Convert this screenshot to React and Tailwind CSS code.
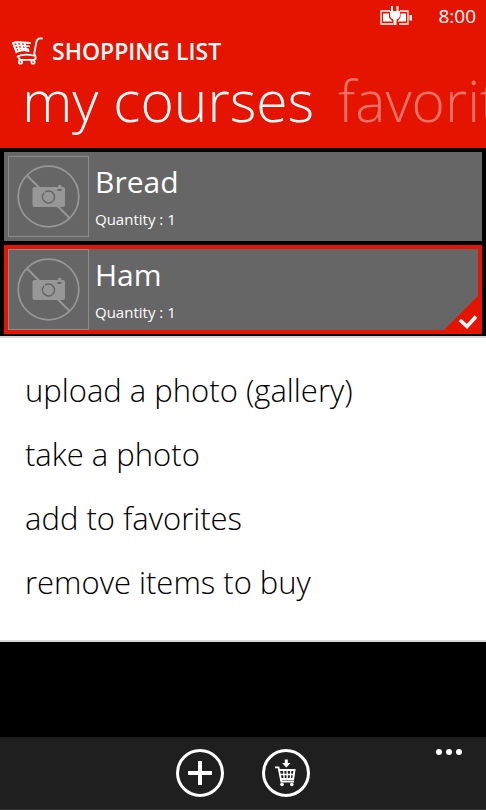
import { useState } from "react";

const items = [
  { id: 1, name: "Bread", quantity: 1 },
  { id: 2, name: "Ham", quantity: 1 },
];

const actions = [
  "upload a photo (gallery)",
  "take a photo",
  "add to favorites",
  "remove items to buy",
];

function BatteryIcon() {
  return (
    <svg width="34" height="20" viewBox="0 0 34 20" fill="none" aria-hidden="true">
      <path d="M10 5H1v13h12M19 18h9V5h-8" stroke="white" strokeWidth="1.3" />
      <path d="M3 7.500h6v4l3.500 4H3zM20.500 7.500H26v8h-8.500l3-4z" fill="white" />
      <path d="M29.500 9H32v5.500h-2.500z" fill="white" />
      <path d="M11 0h2v5h3.500V0h2v5H20v3.500c0 3-1.500 4.500-3.500 5V19h-3v-5.500c-2-.5-3.500-2-3.500-5V5h1z" fill="white" />
    </svg>
  );
}

function CartLogo() {
  return (
    <svg width="32" height="28" viewBox="0 0 32 28" fill="none" stroke="white" strokeLinecap="round" aria-hidden="true">
      <path d="M30 1.500c-3-.6-5 .8-5.600 3.500L22.300 16c-.3 1.500 1.400 2.500 1.400 4.500 0 1.400-.8 2.300-2.500 2.300" strokeWidth="1.800" />
      <path d="M1 6C4 4.200 10 6 18 6M1 6L4.500 15C9 12.500 14 13 16.500 14" strokeWidth="2" />
      <path d="M2 9c4-1.200 9-.5 15 .3M3.200 12c4-1.200 9-.7 13 .3" strokeWidth="1.700" />
      <path d="M4.800 5.500L7.500 14M8.800 5.500L11 13.500M12.800 6l1.200 7.500" strokeWidth="1.800" />
      <path d="M5.500 19.500c4.500-2.500 11-2.300 17-.8M6.500 20c0 2 1.500 3 4 2.800h11" strokeWidth="1.700" />
      <circle cx="8.500" cy="25" r="1.700" strokeWidth="1.700" />
      <circle cx="21" cy="25" r="1.700" strokeWidth="1.700" />
    </svg>
  );
}

function NoPhoto() {
  return (
    <svg className="shrink-0" width="81" height="81" viewBox="0 0 81 81" fill="none" aria-hidden="true">
      <rect x="0.500" y="0.500" width="80" height="80" stroke="#8c8c8c" />
      <circle cx="40.500" cy="40.500" r="30.300" stroke="#979797" strokeWidth="1.700" />
      <path d="M19 19.500l43 43" stroke="#979797" strokeWidth="1.900" />
      <rect x="24.500" y="31" width="32.500" height="20" rx="2" fill="#979797" />
      <rect x="50" y="29" width="3.500" height="3" rx="1" fill="#979797" />
      <rect x="49.500" y="33" width="4" height="2" fill="#666" />
      <circle cx="40.500" cy="41" r="6" stroke="#666" strokeWidth="1.500" strokeDasharray="17.500 1.350" transform="rotate(50 40.500 41)" />
    </svg>
  );
}

function ItemRow({ item, selected, onSelect }) {
  return (
    <li>
      <button
        type="button"
        aria-pressed={selected}
        onClick={onSelect}
        className={`relative flex w-full gap-1.5 border-4 bg-[#666] text-left ${
          selected ? "border-[#e51400]" : "border-[#666]"
        }`}
      >
        <NoPhoto />
        <span className="flex flex-col">
          <span className="text-[30px] leading-[52px]">{item.name}</span>
          <span className="text-[15px] leading-[22px]">Quantity : {item.quantity}</span>
        </span>
        {selected && (
          <svg className="absolute -right-1 -bottom-1" width="42" height="42" viewBox="0 0 42 42" fill="none" aria-hidden="true">
            <path d="M42 0v42H0z" fill="#e51400" />
            <path d="M20 28l7 6.500 9-10" stroke="white" strokeWidth="3.600" />
          </svg>
        )}
      </button>
    </li>
  );
}

function CartDownIcon() {
  return (
    <svg width="48" height="48" viewBox="0 0 48 48" fill="none" aria-hidden="true">
      <circle cx="24" cy="24" r="22.500" stroke="white" strokeWidth="3" />
      <path d="M22.800 10.500h3v3.500h2.700l-4.200 4.500-4.200-4.500h2.700z" fill="white" />
      <path d="M13 18.300h3.500L19.300 32.500H32" stroke="white" strokeWidth="1.800" />
      <path d="M16.800 21H32.500l-1.300 9H18.500" stroke="white" strokeWidth="2" />
      <path d="M17.500 25.500h15M21.700 21l.4 9M25.200 21v9M28.700 21l-.4 9" stroke="white" strokeWidth="1.300" />
      <circle cx="20" cy="35.500" r="1.800" fill="white" />
      <circle cx="29.800" cy="35.500" r="1.800" fill="white" />
    </svg>
  );
}

export default function App() {
  const [selectedId, setSelectedId] = useState(2);

  return (
    <div className="flex min-h-screen flex-col overflow-hidden bg-black font-['Open_Sans',sans-serif] text-white">
      <header className="bg-[#e51400]">
        <div className="flex h-8 items-center justify-end gap-6 pr-2.5">
          <BatteryIcon />
          <time className="text-[19px] leading-8">8:00</time>
        </div>
        <div className="flex items-center gap-2 px-3 pt-0.5">
          <CartLogo />
          <h1 className="text-[23px] leading-[34px] font-semibold">SHOPPING LIST</h1>
        </div>
        <nav className="flex gap-6 overflow-hidden px-[22px] pb-4 text-[57px] leading-[64px] font-[350] whitespace-nowrap">
          <button type="button" aria-current="page" className="shrink-0">my courses</button>
          <button type="button" className="shrink-0 text-white/40">favorites</button>
        </nav>
      </header>

      <main className="flex flex-1 flex-col">
        <ul className="flex flex-col gap-1 px-1 pt-1 pb-0.5">
          {items.map((item) => (
            <ItemRow
              key={item.id}
              item={item}
              selected={item.id === selectedId}
              onSelect={() => setSelectedId(item.id)}
            />
          ))}
        </ul>

        {/* Context menu for the selected item */}
        <ul className="border-y-2 border-[#d8d8d8] bg-white pt-5 pb-[26px] text-black">
          {actions.map((action) => (
            <li key={action}>
              <button type="button" className="w-full px-[25px] text-left text-[31px] leading-[64px] font-[350]">
                {action}
              </button>
            </li>
          ))}
        </ul>
      </main>

      <footer className="grid grid-cols-[1fr_auto_1fr] items-start border-b border-[#3a3a3a] bg-[#1f1f1f] px-6 py-3">
        <div className="col-start-2 flex gap-[38px]">
          <button type="button" aria-label="add">
            <svg width="48" height="48" viewBox="0 0 48 48" fill="none" stroke="white" aria-hidden="true">
              <circle cx="24" cy="24" r="22.500" strokeWidth="3" />
              <path d="M24 12v24M12 24h24" strokeWidth="4" />
            </svg>
          </button>
          <button type="button" aria-label="add to cart">
            <CartDownIcon />
          </button>
        </div>
        <button type="button" aria-label="more" className="justify-self-end">
          <svg width="26" height="6" viewBox="0 0 26 6" fill="white" aria-hidden="true">
            <circle cx="3" cy="3" r="3" />
            <circle cx="13" cy="3" r="3" />
            <circle cx="23" cy="3" r="3" />
          </svg>
        </button>
      </footer>
    </div>
  );
}
